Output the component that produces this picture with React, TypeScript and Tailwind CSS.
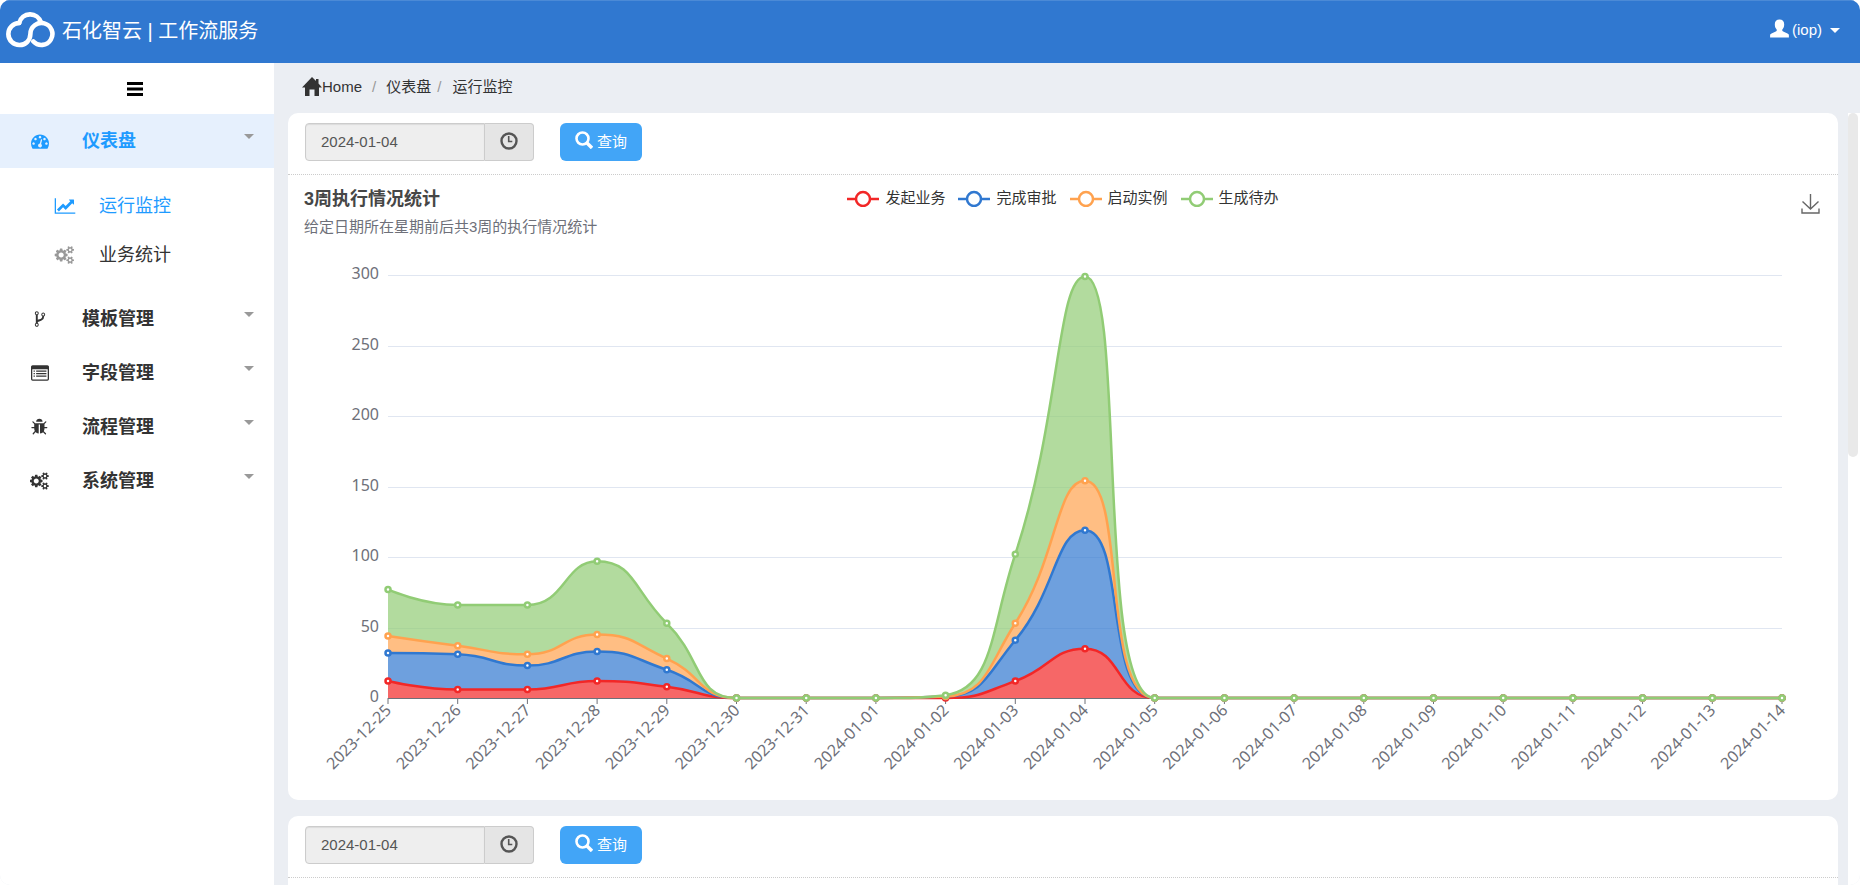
import type { ReactNode } from "react";

const DATES = [
  "2023-12-25", "2023-12-26", "2023-12-27", "2023-12-28", "2023-12-29", "2023-12-30", "2023-12-31",
  "2024-01-01", "2024-01-02", "2024-01-03", "2024-01-04", "2024-01-05", "2024-01-06", "2024-01-07",
  "2024-01-08", "2024-01-09", "2024-01-10", "2024-01-11", "2024-01-12", "2024-01-13", "2024-01-14",
];

// running totals, each series already includes the ones below it
const SERIES = [
  { name: "发起业务", color: "#f22727", totals: [12, 6, 6, 12, 8, 0, 0, 0, 0, 12, 35] },
  { name: "完成审批", color: "#3078d0", totals: [32, 31, 23, 33, 20, 0, 0, 0, 1, 41, 119] },
  { name: "启动实例", color: "#ffa24f", totals: [44, 37, 31, 45, 28, 0, 0, 0, 1, 53, 154] },
  { name: "生成待办", color: "#91cc75", totals: [77, 66, 66, 97, 53, 0, 0, 0, 2, 102, 299] },
];

const PATHS = {
  dashboard:
    "M384 1152q0-53-37.5-90.5t-90.5-37.5-90.5 37.5-37.5 90.5 37.5 90.5 90.5 37.5 90.5-37.5 37.5-90.5zm192-448q0-53-37.5-90.5t-90.5-37.5-90.5 37.5-37.5 90.5 37.5 90.5 90.5 37.5 90.5-37.5 37.5-90.5zm428 481l101-382q6-26-7.5-48.5t-38.5-29.5-48 6.5-30 39.5l-101 382q-60 5-107 43.5t-63 98.5q-20 77 20 146t117 89 146-20 89-117q16-60-6-117t-72-91zm660-33q0-53-37.5-90.5t-90.5-37.5-90.5 37.5-37.5 90.5 37.5 90.5 90.5 37.5 90.5-37.5 37.5-90.5zm-640-640q0-53-37.5-90.5t-90.5-37.5-90.5 37.5-37.5 90.5 37.5 90.5 90.5 37.5 90.5-37.5 37.5-90.5zm448 192q0-53-37.5-90.5t-90.5-37.5-90.5 37.5-37.5 90.5 37.5 90.5 90.5 37.5 90.5-37.5 37.5-90.5zm320 448q0 261-141 483-19 29-54 29h-1402q-35 0-54-29-141-221-141-483 0-182 71-348t191-286 286-191 348-71 348 71 286 191 191 286 71 348z",
  lineChart:
    "M2048 1536v128h-2048v-1536h128v1408h1920zm-128-1248v435q0 21-19.5 29.5t-35.5-7.5l-121-121-633 633q-10 10-23 10t-23-10l-233-233-416 416-192-192 585-585q10-10 23-10t23 10l233 233 464-464-121-121q-16-16-7.5-35.5t29.5-19.5h435q14 0 23 9t9 23z",
  cogs:
    "M896 896q0-106-75-181t-181-75-181 75-75 181 75 181 181 75 181-75 75-181zm768 512q0-52-38-90t-90-38-90 38-38 90q0 53 37.5 90.5t90.5 37.5 90.5-37.5 37.5-90.5zm0-1024q0-52-38-90t-90-38-90 38-38 90q0 53 37.5 90.5t90.5 37.5 90.5-37.5 37.5-90.5zm-384 421v185q0 10-7 19.5t-16 10.5l-155 24q-11 35-32 76 34 48 90 115 7 11 7 20 0 12-7 19-23 30-82.5 89.5t-78.5 59.5q-11 0-21-7l-115-90q-37 19-77 31-11 108-23 155-7 24-30 24h-186q-11 0-20-7.5t-10-17.5l-23-153q-34-10-75-31l-118 89q-7 7-20 7-11 0-21-8-144-133-144-160 0-9 7-19 10-14 41-53t47-61q-23-44-35-82l-152-24q-10-1-17-9.5t-7-19.5v-185q0-10 7-19.5t16-10.5l155-24q11-35 32-76-34-48-90-115-7-11-7-20 0-12 7-20 22-30 82-89t79-59q11 0 21 7l115 90q34-18 77-32 11-108 23-154 7-24 30-24h186q11 0 20 7.5t10 17.5l23 153q34 10 75 31l118-89q8-7 20-7 11 0 21 8 144 133 144 160 0 8-7 19-12 16-42 54t-45 60q23 48 34 82l152 23q10 2 17 10.5t7 19.5zm640 533v140q0 16-149 31-12 27-30 52 51 113 51 138 0 4-4 7-122 71-124 71-8 0-46-47t-52-68q-20 2-30 2t-30-2q-14 21-52 68t-46 47q-2 0-124-71-4-3-4-7 0-25 51-138-18-25-30-52-149-15-149-31v-140q0-16 149-31 13-29 30-52-51-113-51-138 0-4 4-7 4-2 35-20t59-34 30-16q8 0 46 46.5t52 67.5q20-2 30-2t30 2q51-71 92-112l6-2q4 0 124 70 4 3 4 7 0 25-51 138 17 23 30 52 149 15 149 31zm0-1024v140q0 16-149 31-12 27-30 52 51 113 51 138 0 4-4 7-122 71-124 71-8 0-46-47t-52-68q-20 2-30 2t-30-2q-14 21-52 68t-46 47q-2 0-124-71-4-3-4-7 0-25 51-138-18-25-30-52-149-15-149-31v-140q0-16 149-31 13-29 30-52-51-113-51-138 0-4 4-7 4-2 35-20t59-34 30-16q8 0 46 46.5t52 67.5q20-2 30-2t30 2q51-71 92-112l6-2q4 0 124 70 4 3 4 7 0 25-51 138 17 23 30 52 149 15 149 31z",
  fork:
    "M672 1472q0-40-28-68t-68-28-68 28-28 68 28 68 68 28 68-28 28-68zm0-1152q0-40-28-68t-68-28-68 28-28 68 28 68 68 28 68-28 28-68zm640 128q0-40-28-68t-68-28-68 28-28 68 28 68 68 28 68-28 28-68zm96 0q0 52-26 96.5t-70 69.5q-2 287-226 414-67 38-203 81-128 40-169.5 71t-41.5 100v26q44 25 70 69.5t26 96.5q0 80-56 136t-136 56-136-56-56-136q0-52 26-96.5t70-69.5v-820q-44-25-70-69.5t-26-96.5q0-80 56-136t136-56 136 56 56 136q0 52-26 96.5t-70 69.5v497q54-26 154-57 55-17 87.5-29.5t70.5-31 59-39.5 40.5-51 28-69.5 8.5-91.5q-44-25-70-69.5t-26-96.5q0-80 56-136t136-56 136 56 56 136z",
  list:
    "M160 128h1472q66 0 113 47t47 113v1216q0 66-47 113t-113 47h-1472q-66 0-113-47t-47-113v-1216q0-66 47-113t113-47zm-32 384v992q0 13 9.500 22.500t22.500 9.500h1472q13 0 22.500-9.500t9.500-22.500v-992zm128 128h128v128h-128zm256 0h1024v128h-1024zm-256 256h128v128h-128zm256 0h1024v128h-1024zm-256 256h128v128h-128zm256 0h1024v128h-1024z",
  bug:
    "M1632 960q0 26-19 45t-45 19h-224q0 171-67 290l208 209q19 19 19 45t-19 45q-18 19-45 19t-45-19l-198-197q-5 5-15 13t-42 28.5-65 36.5-82 29-97 13v-896h-128v896q-51 0-101.5-13.5t-87-33-66-39-43.5-32.5l-15-14-183 207q-20 21-48 21-24 0-43-16-19-18-20.5-44.5t15.5-46.5l202-227q-58-114-58-274h-224q-26 0-45-19t-19-45 19-45 45-19h224v-294l-173-173q-19-19-19-45t19-45 45-19 45 19l173 173h844l173-173q19-19 45-19t45 19 19 45-19 45l-173 173v294h224q26 0 45 19t19 45zm-480-576h-640q0-133 93.5-226.5t226.5-93.5 226.5 93.5 93.5 226.5z",
};

const MENU: { label: string; icon: keyof typeof PATHS; children?: { label: string; icon: keyof typeof PATHS; active?: boolean }[] }[] = [
  {
    label: "仪表盘",
    icon: "dashboard",
    children: [
      { label: "运行监控", icon: "lineChart", active: true },
      { label: "业务统计", icon: "cogs" },
    ],
  },
  { label: "模板管理", icon: "fork" },
  { label: "字段管理", icon: "list" },
  { label: "流程管理", icon: "bug" },
  { label: "系统管理", icon: "cogs" },
];

function Icon({ name, className }: { name: keyof typeof PATHS; className?: string }) {
  const wide = name === "lineChart" || name === "cogs";
  return (
    <svg viewBox={wide ? "0 0 2048 1792" : "0 0 1792 1792"} fill="currentColor" fillRule="evenodd" className={className} aria-hidden="true">
      <path d={PATHS[name]} />
    </svg>
  );
}

function Logo() {
  return (
    <svg viewBox="6 8 50 44" className="w-[50px] h-11 shrink-0" fill="none" stroke="#fff" strokeWidth="4.600" strokeLinecap="round" aria-hidden="true">
      <path d="M33.400 40.500a11 11 0 1 0-3-7.500c-.2 6.200-4.400 11-10.900 11a11 11 0 0 1-.3-22" />
      <path d="M19.200 22a11.300 11.300 0 0 1 21.800-.6" />
    </svg>
  );
}

type Point = [number, number];

function clamp(v: number, a: number, b: number) {
  return Math.max(Math.min(v, Math.max(a, b)), Math.min(a, b));
}

// Bezier segments through the points, control points never overshoot their neighbours
function smoothSegments(pts: Point[], smooth = 0.5) {
  let c0: Point = pts[0];
  const out: [Point, Point, Point][] = [];
  for (let i = 1; i < pts.length; i++) {
    const [px, py] = pts[i - 1];
    const [x, y] = pts[i];
    let c1: Point = [x, y];
    let next: Point = [x, y];
    if (i < pts.length - 1) {
      const [nx, ny] = pts[i + 1];
      const prevLen = Math.hypot(x - px, y - py);
      const nextLen = Math.hypot(nx - x, ny - y);
      const ratio = nextLen / (nextLen + prevLen);
      const ax = clamp(x + (nx - px) * smooth * ratio, nx, x);
      const ay = clamp(y + (ny - py) * smooth * ratio, ny, y);
      c1 = [
        clamp(x - ((ax - x) * prevLen) / nextLen, px, x),
        clamp(y - ((ay - y) * prevLen) / nextLen, py, y),
      ];
      next = [x + ((x - c1[0]) * nextLen) / prevLen, y + ((y - c1[1]) * nextLen) / prevLen];
    }
    out.push([c0, c1, [x, y]]);
    c0 = next;
  }
  return out;
}

function curve(segs: [Point, Point, Point][]) {
  return segs.map(([a, b, p]) => `C${a.join(" ")} ${b.join(" ")} ${p.join(" ")}`).join("");
}

function Chart() {
  const x = (i: number) => 100 + i * 69.7;
  const y = (v: number) => 443 - v * 1.41;
  const lines = SERIES.map((s) => {
    const pts = DATES.map((_, i): Point => [x(i), y(s.totals[i] ?? 0)]);
    const segs = smoothSegments(pts);
    return { ...s, pts, segs, d: `M${pts[0].join(" ")}${curve(segs)}` };
  });
  const areas = lines.map((s, n) => {
    const below = lines[n - 1];
    if (!below) return `${s.d}L${x(20)} ${y(0)}L${x(0)} ${y(0)}Z`;
    const starts = [...below.pts].reverse().slice(1);
    const back = [...below.segs].reverse().map(([a, b], i) => `C${b.join(" ")} ${a.join(" ")} ${starts[i].join(" ")}`).join("");
    return `${s.d}L${below.pts[20].join(" ")}${back}Z`;
  });

  return (
    <svg viewBox="0 0 1550 545" className="block w-full" role="img" aria-label="3周执行情况统计" fontFamily='"Noto Sans", "Noto Sans CJK SC", sans-serif' fontSize="16">
      {[0, 50, 100, 150, 200, 250, 300].map((v) => (
        <g key={v}>
          {v > 0 && <line x1={x(0)} x2={x(20)} y1={Math.round(y(v)) + 0.5} y2={Math.round(y(v)) + 0.5} stroke="#e0e6f1" />}
          <text x="91" y={y(v) + 4} textAnchor="end" fill="#6e7079">{v}</text>
        </g>
      ))}
      <line x1={x(0)} x2={x(20)} y1="443.5" y2="443.5" stroke="#6e7079" />
      {DATES.map((d, i) => (
        <g key={d}>
          <line x1={x(i)} x2={x(i)} y1="443" y2="449" stroke="#6e7079" />
          <text transform={`translate(${x(i)} 452) rotate(-45)`} x="0" y="6" textAnchor="end" fill="#6e7079">{d}</text>
        </g>
      ))}
      {areas.map((d, n) => (
        <path key={n} d={d} fill={lines[n].color} fillOpacity="0.7" />
      ))}
      {lines.map((s) => (
        <g key={s.name} stroke={s.color} strokeWidth="2.500">
          <path d={s.d} fill="none" strokeLinejoin="bevel" />
          {s.pts.map(([cx, cy], i) => (
            <circle key={i} cx={cx} cy={cy} r="2.500" fill="#fff" />
          ))}
        </g>
      ))}
    </svg>
  );
}

function SearchBar() {
  return (
    <form className="flex items-start h-[62px] pt-[10px] pl-[17px] border-b border-dotted border-[#ccc]" onSubmit={(e) => e.preventDefault()}>
      <input
        aria-label="日期"
        readOnly
        defaultValue="2024-01-04"
        className="w-[180px] h-[38px] px-[15px] pb-[2px] text-[15px] text-[#555] bg-[#eee] border border-[#ccc] rounded-l-sm shadow-[inset_0_1px_1px_rgba(0,0,0,0.08)] outline-none"
      />
      <button type="button" aria-label="选择日期" className="w-[49px] h-[38px] pb-[2px] flex items-center justify-center bg-[#e5e5e5] border border-l-0 border-[#ccc] rounded-r-sm text-[#555]">
        <svg viewBox="0 0 18 18" className="w-[18px] h-[18px]" fill="none" stroke="currentColor">
          <circle cx="9" cy="9" r="7.500" strokeWidth="2.400" />
          <path d="M8.700 4v5.500h3.600" strokeWidth="1.600" />
        </svg>
      </button>
      <button type="submit" className="ml-[26px] w-[82px] h-[38px] flex items-center justify-center gap-1 rounded-md bg-[#42a5f7] text-white text-[15px]">
        <svg viewBox="0 0 18 18" className="w-[18px] h-[18px] -mt-1" fill="none" stroke="currentColor">
          <circle cx="7.500" cy="7.500" r="6" strokeWidth="2.600" />
          <path d="M12 12l5 5" strokeWidth="3.400" />
        </svg>
        查询
      </button>
    </form>
  );
}

function Card({ children }: { children: ReactNode }) {
  return <section className="bg-white rounded-[10px] shrink-0">{children}</section>;
}

function Sidebar() {
  return (
    <aside className="w-[274px] shrink-0 bg-white">
      <button type="button" aria-label="菜单" className="flex w-full h-[51px] items-center justify-center text-black">
        <svg viewBox="0 0 16 14" className="w-4 h-[14px] mr-1" fill="currentColor">
          <path d="M0 0h16v3H0zM0 5.500h16v3H0zM0 11h16v3H0z" />
        </svg>
      </button>
      <nav>
        {MENU.map((item) => (
          <div key={item.label}>
            <a href="#" className={item.children ? "flex items-center h-[54px] pl-[30px] pr-5 bg-[#e6f0fd] text-[#1e9bff]" : "flex items-center h-[54px] pl-[30px] pr-5 text-[#333]"}>
              <Icon name={item.icon} className="w-5 h-[18px]" />
              <span className="ml-8 flex-1 text-lg font-bold">{item.label}</span>
              <span className="mb-[10px] border-x-[5px] border-t-[5px] border-x-transparent border-t-[#999]" />
            </a>
            {item.children && (
              <div className="py-[13px]">
                {item.children.map((c) => (
                  <a key={c.label} href="#" className={c.active ? "flex items-center h-[49px] pl-[54px] text-[#1e9bff]" : "flex items-center h-[49px] pl-[54px] text-[#333]"}>
                    <Icon name={c.icon} className={c.active ? "w-[22px] h-[18px]" : "w-[22px] h-[18px] text-[#999]"} />
                    <span className="ml-[23px] text-lg">{c.label}</span>
                  </a>
                ))}
              </div>
            )}
          </div>
        ))}
      </nav>
    </aside>
  );
}

export default function App() {
  return (
    <div className="h-screen flex flex-col overflow-hidden rounded-[10px] bg-[#ebeef3] font-['Liberation_Sans','Noto_Sans_CJK_SC',sans-serif] text-[#333]">
      <header className="h-[63px] shrink-0 flex items-center justify-between bg-[#3078d0] border-t border-[#4b8ad6] text-white pl-[6px] pr-5 pb-[3px]">
        <div className="flex items-center gap-[6px]">
          <Logo />
          <h1 className="text-xl">石化智云 | 工作流服务</h1>
        </div>
        <button type="button" className="flex items-center text-[15px]">
          <svg viewBox="0 0 19 19" className="w-[19px] h-[19px] mr-[3px] mb-1" fill="currentColor" aria-hidden="true">
            <path d="M9.500.500c3 0 4.700 2 4.700 4.700 0 1.800-.4 3.600-1.500 4.900-.8 1-.6 2 .5 2.500l4.300 2c1.100.5 1.400 1 1.400 2v1.900H.1v-1.900c0-1 .3-1.500 1.400-2l4.300-2c1.100-.5 1.300-1.500.5-2.500C5.200 8.800 4.800 7 4.800 5.200 4.800 2.500 6.500.500 9.500.500z" />
          </svg>
          (iop)
          <span className="ml-2 border-x-[5px] border-t-[5px] border-x-transparent border-t-white" />
        </button>
      </header>

      <div className="flex flex-1 min-h-0">
        <Sidebar />
        <main className="flex-1 min-w-0 flex flex-col">
          <nav aria-label="breadcrumb" className="h-[50px] shrink-0 flex items-center pl-7 pb-[2px] text-[15px]">
            <a href="#" className="flex items-center">
              <svg viewBox="0 0 20 19" className="w-5 h-[19px] mb-[2px]" fill="currentColor" aria-hidden="true">
                <path d="M10 0l4 4V2h2.500v4.500L20 10.500h-3V19h-4.500v-6.500h-5V19H3v-8.500H0z" />
              </svg>
              Home
            </a>
            <span className="mx-[10px] text-[#999]">/</span>
            <a href="#">仪表盘</a>
            <span className="ml-[6px] mr-[11px] text-[#999]">/</span>
            <span>运行监控</span>
          </nav>

          <div className="flex flex-1 min-h-0">
            <div className="flex-1 min-w-0 flex flex-col gap-4 pr-[10px] pl-[14px] overflow-hidden">
              <Card>
                <SearchBar />
                <div className="relative h-[80px] px-4">
                  <h2 className="pt-[10px] text-lg leading-7 font-bold text-[#464646]">3周执行情况统计</h2>
                  <p className="text-[15px] leading-7 text-[#6e7079]">给定日期所在星期前后共3周的执行情况统计</p>
                  <ul className="absolute inset-x-0 top-3 flex justify-center gap-[13px]">
                    {SERIES.map((s) => (
                      <li key={s.name} className="flex items-center gap-[6px] text-[15px]">
                        <svg viewBox="0 0 32 18" className="w-8 h-[18px]" fill="#fff" stroke={s.color} strokeWidth="2.500">
                          <path d="M0 10h32" />
                          <circle cx="16" cy="10" r="7" />
                        </svg>
                        {s.name}
                      </li>
                    ))}
                  </ul>
                  <button type="button" aria-label="保存为图片" className="absolute right-[17px] top-[19px] text-[#666]">
                    <svg viewBox="0 0 20 20" className="w-5 h-5" fill="none" stroke="currentColor" strokeWidth="1.400">
                      <path d="M1 14.500V19h17v-4.500M9.500 0v15M1.500 7.500l8 7.500 8-7.500" />
                    </svg>
                  </button>
                </div>
                <Chart />
              </Card>
              <Card>
                <SearchBar />
                <div className="h-[620px]" />
              </Card>
            </div>
            <div className="w-3 bg-white">
              <div className="w-[10px] h-[344px] rounded-full bg-[#e9e9e9]" />
            </div>
          </div>
        </main>
      </div>
    </div>
  );
}
